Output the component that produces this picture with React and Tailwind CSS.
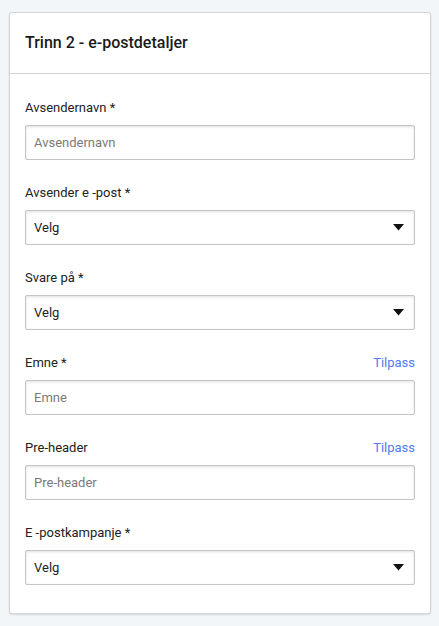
import React from "react";

function Label({ text, link }) {
  return (
    <div className="flex items-center justify-between h-[18px] mb-[8px]">
      <span className="text-[13px] leading-4 text-[#222]">{text}</span>
      {link && <span className="text-[13px] leading-4 text-[#4f7cf0]">{link}</span>}
    </div>
  );
}

function TextField({ label, placeholder, link }) {
  return (
    <div>
      <Label text={label} link={link} />
      <div className="h-[35px] border border-[#c4c4c4] rounded-[2px] bg-white shadow-[inset_0_1px_3px_rgba(0,0,0,0.12)] flex items-center px-[8px]">
        <span className="text-[13px] text-[#7a7a7a]">{placeholder}</span>
      </div>
    </div>
  );
}

function SelectField({ label }) {
  return (
    <div>
      <Label text={label} />
      <div className="h-[35px] border border-[#c4c4c4] rounded-[2px] bg-white shadow-[inset_0_1px_3px_rgba(0,0,0,0.12)] flex items-center justify-between pl-[8px] pr-[10px]">
        <span className="text-[13px] text-[#222]">Velg</span>
        <svg width="11" height="7" viewBox="0 0 11 7">
          <path d="M0 0 L11 0 L5.5 6.5 Z" fill="#111" />
        </svg>
      </div>
    </div>
  );
}

export default function App() {
  return (
    <div
      className="w-[439px] h-[626px] bg-[#f3f6f9] pt-[12px] pl-[9px]"
      style={{ fontFamily: "Roboto, 'Noto Sans', sans-serif" }}
    >
      <div className="w-[422px] h-[602px] bg-white border border-[#d2d6da] rounded-[3px] shadow-[0_1px_2px_rgba(0,0,0,0.12)] flex flex-col">
        <div className="h-[61px] flex items-center px-[15px] border-b border-[#cfd2d6]">
          <span className="text-[16px] font-medium text-[#1a1a1a]">Trinn 2 - e-postdetaljer</span>
        </div>
        <div className="px-[15px] pt-[25px] flex flex-col gap-[24px]">
          <TextField label="Avsendernavn *" placeholder="Avsendernavn" />
          <SelectField label="Avsender e -post *" />
          <SelectField label="Svare på *" />
          <TextField label="Emne *" placeholder="Emne" link="Tilpass" />
          <TextField label="Pre-header" placeholder="Pre-header" link="Tilpass" />
          <SelectField label="E -postkampanje *" />
        </div>
      </div>
    </div>
  );
}
